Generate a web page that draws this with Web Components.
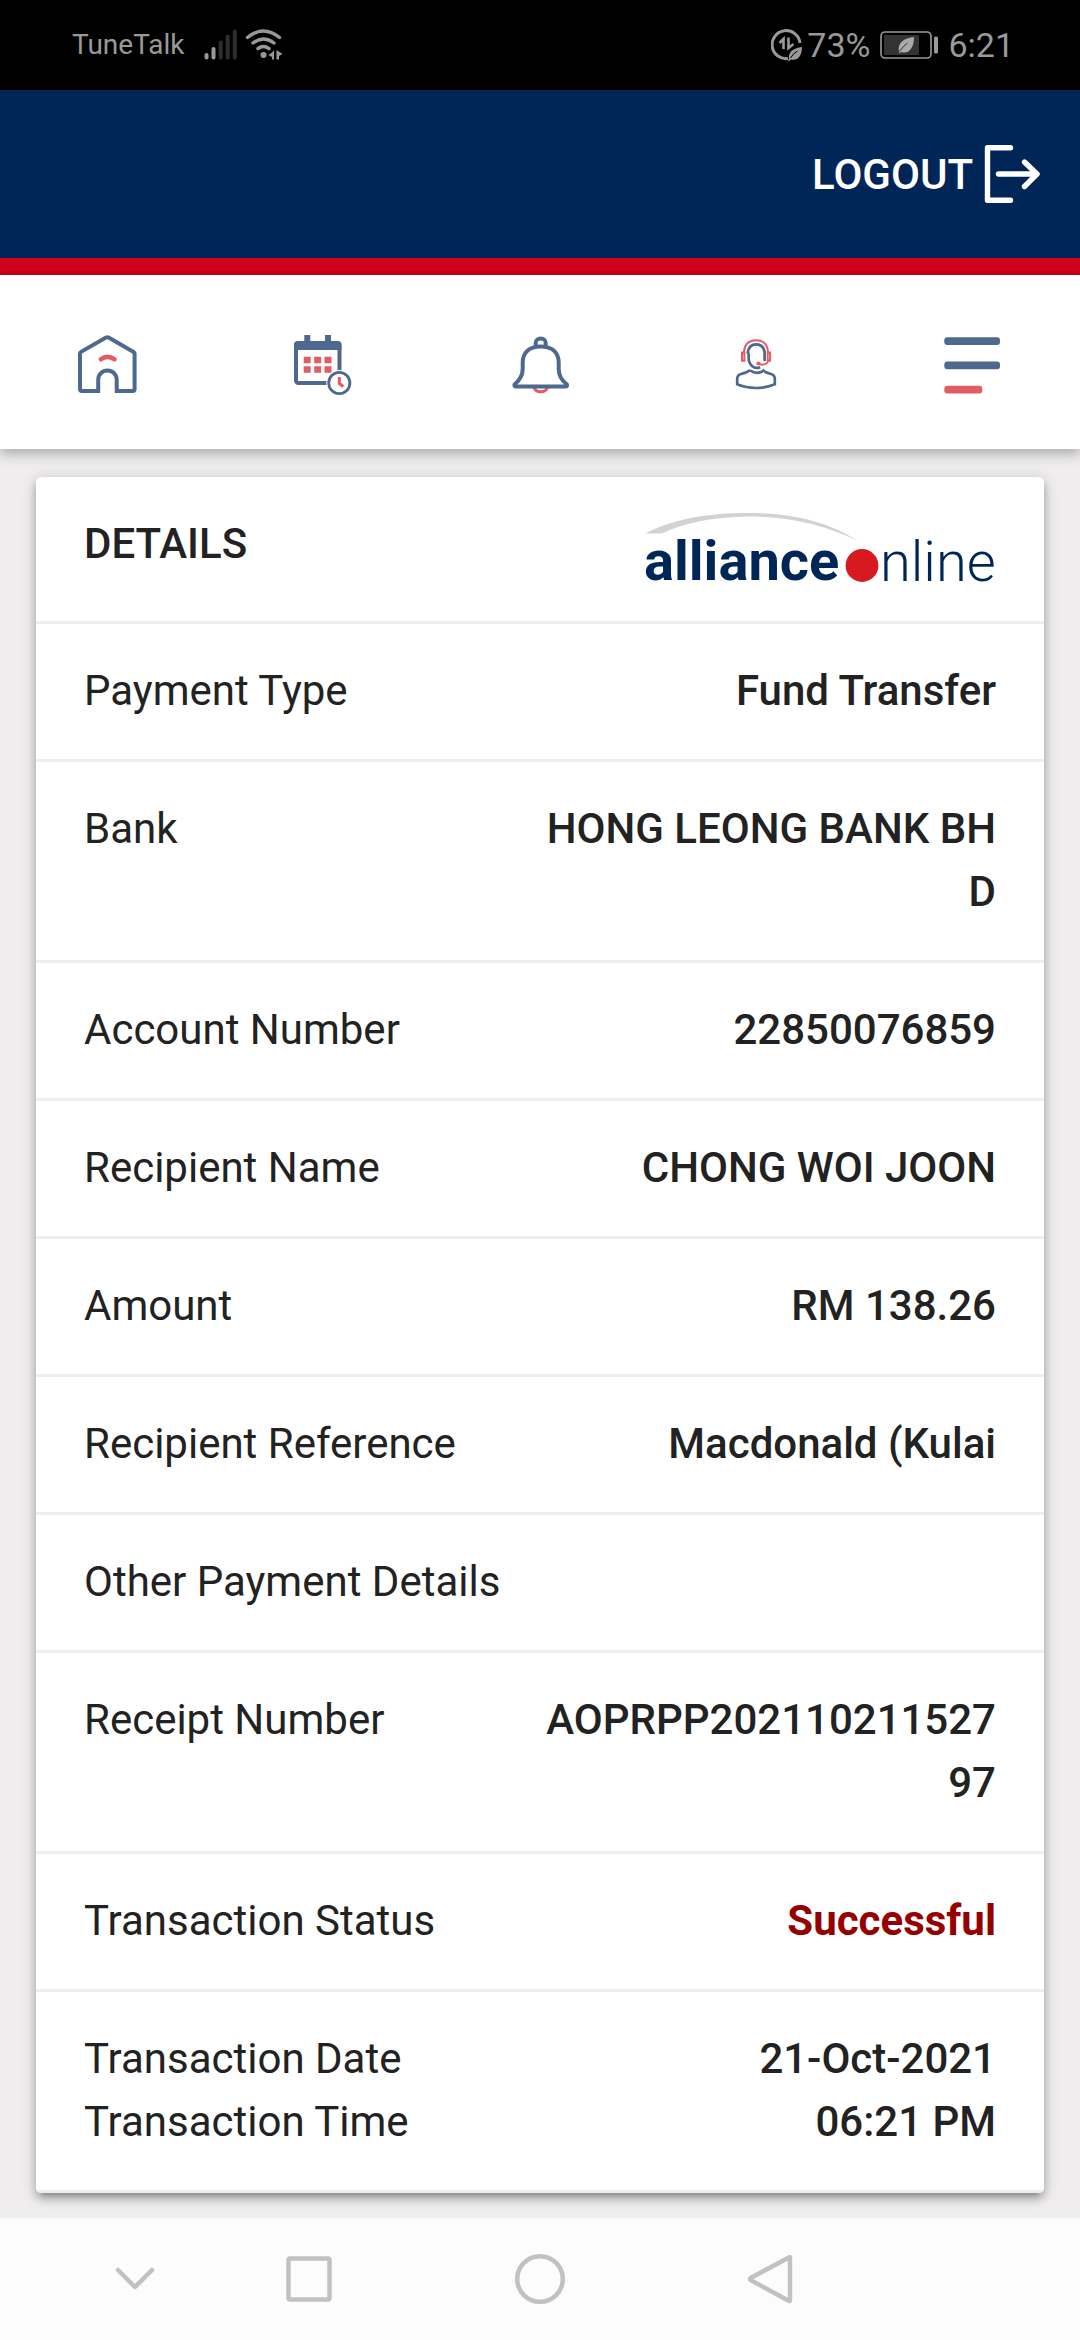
<!DOCTYPE html>
<html lang="en">
<head>
<meta charset="utf-8">
<meta name="viewport" content="width=device-width, initial-scale=1">
<title>alliance online - Details</title>
<style>
  html, body { margin: 0; }
  body {
    --ink: #222222;
    --navy: #002657;
    --red: #d0021b;
    --icon: #4e698d;
    --icon-accent: #e05d63;
    --line: #eeeeee;
    --success: #960000;
    font-family: Roboto, "Liberation Sans", sans-serif;
    font-size: 42px;
    line-height: 63px;
    color: var(--ink);
    background: #efedee;
  }
</style>
</head>
<body>
<bank-app>
  <status-bar slot="status" carrier="TuneTalk" battery="73%" time="6:21"></status-bar>
  <app-header slot="header">LOGOUT</app-header>
  <icon-nav slot="nav"></icon-nav>
  <detail-card>
    <span slot="title">DETAILS</span>
    <brand-logo slot="logo"></brand-logo>
    <detail-row>Payment Type<span slot="value">Fund Transfer</span></detail-row>
    <detail-row>Bank<span slot="value">HONG LEONG BANK BHD</span></detail-row>
    <detail-row>Account Number<span slot="value">22850076859</span></detail-row>
    <detail-row>Recipient Name<span slot="value">CHONG WOI JOON</span></detail-row>
    <detail-row>Amount<span slot="value">RM 138.26</span></detail-row>
    <detail-row>Recipient Reference<span slot="value">Macdonald (Kulai</span></detail-row>
    <detail-row>Other Payment Details</detail-row>
    <detail-row>Receipt Number<span slot="value">AOPRPP20211021152797</span></detail-row>
    <detail-row success>Transaction Status<span slot="value">Successful</span></detail-row>
    <detail-row>Transaction Date<br>Transaction Time<span slot="value">21-Oct-2021<br>06:21 PM</span></detail-row>
  </detail-card>
  <system-nav slot="system"></system-nav>
</bank-app>

<script>
const define = (name, html, setup) => {
  const template = document.createElement('template');
  template.innerHTML = html;
  customElements.define(name, class extends HTMLElement {
    constructor() {
      super();
      this.attachShadow({ mode: 'open' }).append(template.content.cloneNode(true));
    }
    connectedCallback() {
      if (setup) setup(this, this.shadowRoot);
    }
  });
};

define('bank-app', `
  <style>
    :host { display: flex; flex-direction: column; min-height: 100vh; }
    main { flex: 1; padding: 28px 36px 25px; }
  </style>
  <slot name="status"></slot>
  <slot name="header"></slot>
  <slot name="nav"></slot>
  <main><slot></slot></main>
  <slot name="system"></slot>
`);

define('status-bar', `
  <style>
    :host { display: flex; justify-content: space-between; align-items: center; height: 90px;
      padding: 0 66px 0 72px; background: #000; color: #999; font-size: 34px; line-height: 42px; }
    div { display: flex; align-items: center; }
    svg { display: block; }
    .carrier { font-size: 28px; margin-right: 19px; }
    .wifi { margin-left: 7px; }
    .data { margin-right: 4px; }
    .battery { margin: 0 10px; }
  </style>
  <div>
    <span class="carrier"></span>
    <svg width="34" height="32" viewBox="0 0 34 32" fill="none" stroke="#999" stroke-width="4" stroke-linecap="round">
      <path d="M2.5 26v2.5M9.5 20v8.5"/>
      <path stroke="#2e2e2e" d="M16.7 13.500v15M23.700 7.500v21M30.800 2.500v26"/>
    </svg>
    <svg class="wifi" width="38" height="32" viewBox="0 0 38 32" fill="none" stroke="#999" stroke-width="3.400" stroke-linecap="round">
      <path d="M2.500 8.500Q18.500-4.500 34.500 8.500M8 14Q18.500 6 29 14M13 19.700Q18.500 15.500 24 19.700"/>
      <circle cx="18.500" cy="26" r="3" fill="#999" stroke="none"/>
      <path fill="#999" stroke="none" d="M29 21v9.500h-2V28l-3.500-2L27 23.500zM31.500 21l6 4-3.500 2v3.500h-2.500z"/>
    </svg>
  </div>
  <div>
    <svg class="data" width="32" height="34" viewBox="0 0 32 34" fill="none" stroke="#999" stroke-width="3">
      <path d="M17 30.500A14 14 0 1 1 29 15"/>
      <path stroke-width="2.600" d="M8.500 15l4-4v10M17.500 9.500v10.500l5-4"/>
      <path fill="#999" stroke="none" d="M18 31c-1-8 5-11 13-12 0 9-4 14-11.500 12.500l-1 1.500h-1.500z"/>
      <path stroke="#000" stroke-width="1" d="M19.500 30q3-5 7-7"/>
    </svg>
    <span class="level"></span>
    <svg class="battery" width="58" height="28" viewBox="0 0 58 28">
      <rect x="1" y="1" width="50" height="26" rx="4" fill="none" stroke="#999" stroke-width="1.600"/>
      <rect x="4" y="4" width="35" height="20" rx="1" fill="#333"/>
      <path fill="#aaa" d="M19 21C17 12 24 7 34 6c0 11-5 17.500-13 15l-1.500 1.500z"/>
      <path d="M19.500 20.500q4-6 8-8.500" stroke="#333" fill="none"/>
      <rect x="54" y="5.500" width="4" height="17" rx="1.500" fill="#999"/>
    </svg>
    <span class="time"></span>
  </div>
`, (host, root) => {
  root.querySelector('.carrier').textContent = host.getAttribute('carrier');
  root.querySelector('.level').textContent = host.getAttribute('battery');
  root.querySelector('.time').textContent = host.getAttribute('time');
});

define('app-header', `
  <style>
    :host { display: flex; justify-content: flex-end; align-items: center; height: 168px;
      padding: 0 36px; background: var(--navy); border-bottom: 17px solid var(--red); }
    button { display: flex; align-items: center; gap: 11px; padding: 0; border: 0; background: none;
      color: #fff; font: inherit; font-weight: 500; cursor: pointer; }
    svg { display: block; }
  </style>
  <button type="button"><slot></slot>
    <svg width="60" height="60" viewBox="0 0 60 60" fill="none" stroke="#fff" stroke-width="5.400" stroke-linecap="round" stroke-linejoin="round">
      <path d="M26.500 3.700H3.500v52.600h23M14.500 30H53M40.500 18L53 30 40.500 42.500"/>
    </svg>
  </button>
`);

define('icon-nav', `
  <style>
    :host { display: block; position: relative; background: #fff; box-shadow: 0 4px 12px 1px rgba(0, 0, 0, .28); }
    nav { display: grid; grid-template-columns: repeat(5, 1fr); padding: 60px 0 54px; }
    a { display: flex; justify-content: center; }
    svg { display: block; width: 60px; height: 60px; fill: none; stroke: var(--icon); stroke-width: 4; }
    .support { stroke-width: 2.700; }
    .accent { stroke: var(--icon-accent); }
    .fill { fill: var(--icon); stroke: none; }
    .accent-fill { fill: var(--icon-accent); stroke: none; }
  </style>
  <nav aria-label="Main">
    <a href="#home" aria-label="Home"><svg viewBox="0 0 60 60">
      <path d="M20.200 56H4a2 2 0 0 1-2-2V18.500q0-1 1-1.600L28 2.600q1.300-.7 2.600 0L55.600 17q1 .6 1 1.600V54a2 2 0 0 1-2 2H38.700V44.700a9.250 9.250 0 0 0-18.500 0z"/>
      <path class="accent" stroke-width="4.500" stroke-linecap="round" d="M22.800 24.300Q29.400 19.500 36.600 24.300"/>
    </svg></a>
    <a href="#schedule" aria-label="Schedule"><svg viewBox="0 0 60 60">
      <rect x="2" y="8" width="43.500" height="40" rx="2.500"/>
      <path class="fill" d="M0 15V9.500Q0 6.300 3.500 6.300H10.300V0h6v6.300H31V0h6v6.300h7q3.500 0 3.500 3.200V15z"/>
      <path class="accent-fill" d="M9.700 21.700h7v6.600h-7zM20.200 21.700h7v6.600h-7zM30.500 21.700h7v6.600h-7zM9.700 31.200h7v6.600h-7zM20.200 31.200h7v6.600h-7zM30.500 31.200h7v6.600h-7z"/>
      <circle cx="45.300" cy="48" r="13" fill="#fff" stroke="none"/>
      <circle cx="45.300" cy="48" r="10.600" stroke-width="2.800"/>
      <path class="accent" stroke-width="3" d="M45.300 42v6.500l4 3"/>
    </svg></a>
    <a href="#alerts" aria-label="Alerts"><svg viewBox="0 0 60 60" stroke-linejoin="round">
      <path class="accent" stroke-width="3" d="M24 52.500Q25.500 56.800 30.700 56.800T37.500 52.500"/>
      <path d="M25.700 11V7.800a5 4.300 0 0 1 10 0V11M12.700 28C12.700 17 20 11.500 30.700 11.500S48.700 17 48.700 28V34C48.700 41 51 45 57 49.500Q57.500 51.500 55.500 51.500H6Q4 51.500 4.500 49.500C10 45 12.700 41 12.700 34z"/>
    </svg></a>
    <a href="#support" aria-label="Support"><svg class="support" viewBox="0 0 60 60">
      <path d="M38.600 26V17.500Q37.500 9.300 30.200 9.300T21.800 17.500Q23.200 19 22.600 22.500 22.600 28 26 31 29.500 34.200 34.200 32.200"/>
      <path d="M24.300 35.200Q20 38.200 15.500 38.800 11.200 40 11.200 44V49.300Q20 53 30 53T48.800 49.300V44Q48.800 40 44.500 38.800 40 38.200 36.200 34.700M24.300 35.500Q30 39.500 36.500 36.500"/>
      <path class="accent" stroke-width="2" d="M18 17C18.500 9 23.500 5.200 30 5.200S41.500 9 42 17M16 17.500h2.400v8.200H16zM41.700 17.500h2.400v8.200h-2.400zM42.500 25.500Q41 29.500 36 29.700L32 28.500"/>
      <circle class="accent-fill" cx="32.300" cy="28.500" r="2"/>
    </svg></a>
    <a href="#menu" aria-label="Menu"><svg viewBox="0 0 60 60">
      <rect class="fill" x="2.300" y="2.300" width="55.700" height="7.700" rx="3"/>
      <rect class="fill" x="2.300" y="26.500" width="55.700" height="7.700" rx="3"/>
      <rect class="accent-fill" x="2.300" y="50.800" width="38" height="7.700" rx="3"/>
    </svg></a>
  </nav>
`);

define('brand-logo', `
  <style>
    :host { display: block; }
    svg { display: block; width: 354px; height: 86px; }
    text { fill: var(--navy); font-family: Roboto, sans-serif; font-size: 56px; }
    .bold { font-weight: 700; }
    .light { font-weight: 300; }
  </style>
  <svg viewBox="-3 -1 354 86" role="img" aria-label="alliance online">
    <path fill="#d1d3d3" d="M0 20.500C30 5 65 0 103 0C150 0 185 10 213 28C180 12 145 3.500 103 3.500C68 4 38 10 17 20.500z"/>
    <text class="bold" x="-1" y="67">alliance</text>
    <circle cx="217" cy="52.500" r="16.400" fill="#d71920"/>
    <text class="light" x="235" y="68">nline</text>
  </svg>
`);

define('detail-card', `
  <style>
    :host { display: block; background: #fff; border-radius: 5px; overflow: hidden;
      box-shadow: 0 6px 9px rgba(0, 0, 0, .2), 0 9px 3px -6px rgba(0, 0, 0, .12), 0 3px 15px rgba(0, 0, 0, .2); }
    header { display: flex; justify-content: space-between; align-items: flex-start;
      padding: 35px 48px 23px; border-bottom: 3px solid var(--line); }
    h1 { margin: 0; font: inherit; font-weight: 500; }
  </style>
  <header><h1><slot name="title"></slot></h1><slot name="logo"></slot></header>
  <slot></slot>
`);

define('detail-row', `
  <style>
    :host { display: grid; grid-template-columns: 1fr 1fr; padding: 35px 48px 37px; border-bottom: 3px solid var(--line); }
    .value { text-align: right; font-weight: 500; word-break: break-all; }
    :host([success]) .value { color: var(--success); font-weight: 700; }
  </style>
  <div><slot></slot></div>
  <div class="value"><slot name="value"></slot></div>
`);

define('system-nav', `
  <style>
    :host { display: grid; grid-template-columns: 48fr 174fr 174fr 288fr 172fr 224fr; align-items: center;
      position: relative; height: 122px; background: #fcfcfc; }
    button { display: flex; justify-content: center; padding: 0; border: 0; background: none; }
    button:first-of-type { grid-column: 2; }
    svg { display: block; width: 52px; height: 52px; fill: none; stroke: #c1c1c1; stroke-width: 4.500;
      stroke-linecap: round; stroke-linejoin: round; }
  </style>
  <button type="button" aria-label="Hide"><svg viewBox="0 0 52 52"><path d="M9 17l17 17 17-17"/></svg></button>
  <button type="button" aria-label="Recent apps"><svg viewBox="0 0 52 52"><rect x="5.500" y="5.500" width="41" height="41" rx="1.500"/></svg></button>
  <button type="button" aria-label="Home"><svg viewBox="0 0 52 52"><circle cx="26" cy="26" r="22.800"/></svg></button>
  <button type="button" aria-label="Back"><svg viewBox="0 0 52 52"><path d="M45.500 4.200Q46 3.500 46 5V47Q46 48.500 45 48L7 27.200Q5 26 7 24.800z"/></svg></button>
`);
</script>
</body>
</html>
